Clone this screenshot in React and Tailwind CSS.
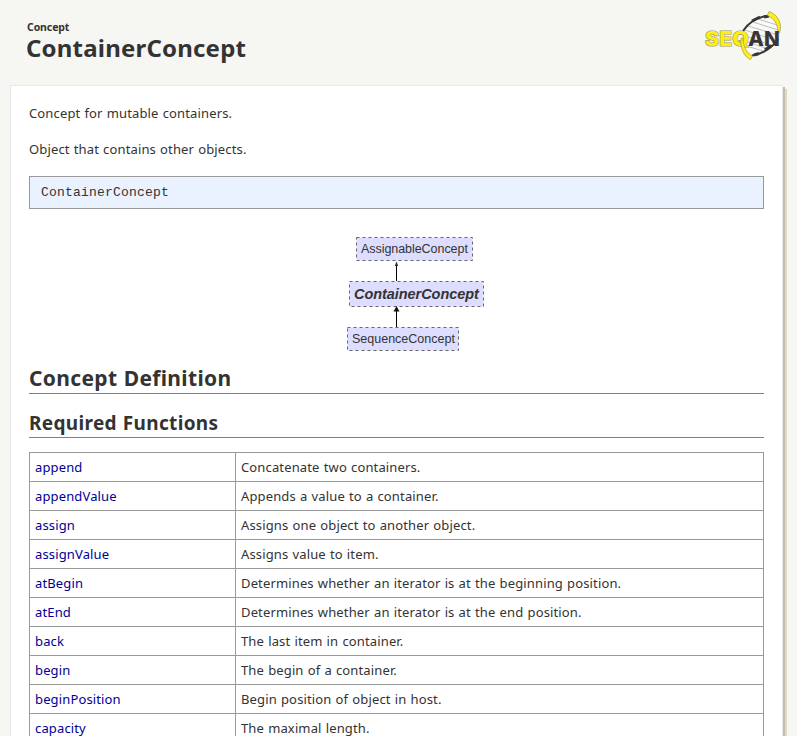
const functions = [
  ["append", "Concatenate two containers."],
  ["appendValue", "Appends a value to a container."],
  ["assign", "Assigns one object to another object."],
  ["assignValue", "Assigns value to item."],
  ["atBegin", "Determines whether an iterator is at the beginning position."],
  ["atEnd", "Determines whether an iterator is at the end position."],
  ["back", "The last item in container."],
  ["begin", "The begin of a container."],
  ["beginPosition", "Begin position of object in host."],
  ["capacity", "The maximal length."],
];

function Logo() {
  return (
    <svg className="mt-[5px] h-[60px] w-[85px]" viewBox="700 5 85 60">
      <path d="M743 31C748 23 757 17 768 16L777 24C781 39 766 52 752 55L744 50Z" fill="#fafaf8" />
      <path
        d="M758 19l19 6M753 22l25 8M748 26l30 9M745 30l32 11M743 35l30 11M742 40l26 9M743 45l20 6"
        stroke="#b4b4b4"
        strokeWidth=".9"
      />
      <path d="M743 31C749 22 758 16.500 768 16" fill="none" stroke="#3a3638" strokeWidth="2" />
      <path d="M752 21l8-4M764 17l5-1M754 55l5-1.500M765 50l6-4.500" fill="none" stroke="#3a3638" strokeWidth="3" />
      <path d="M752 55.500C763 54 773 47 778 39" fill="none" stroke="#3a3638" strokeWidth="2" />
      <path d="M769 11.500C777 14 783 23 779.500 33L778 32C778 25 774 18 767.500 15.500Z" fill="#ffee11" stroke="#9d985c" strokeWidth=".7" />
      <g fontFamily="Inter, sans-serif" fontSize="20.500" fontWeight="800">
        <text x="705" y="46" textLength="44" lengthAdjust="spacingAndGlyphs" fill="#ffee11" stroke="#9d985c" strokeWidth="1.2" paintOrder="stroke">SEQ</text>
        <text x="748" y="46" textLength="32" lengthAdjust="spacingAndGlyphs" fill="#3a3638">AN</text>
      </g>
      <path d="M741 38C740 48 744 57 750.500 59.500L752.500 56C747 53 743.500 48 743 38Z" fill="#ffee11" stroke="#9d985c" strokeWidth=".7" />
    </svg>
  );
}

function Hierarchy() {
  return (
    <svg className="mt-[27px] ml-[317px] h-[117px] w-[140px]" viewBox="346 236 140 117">
      <g fill="#ddddff" stroke="#666" strokeDasharray="3 3">
        <rect x="356.5" y="237.5" width="116" height="23" />
        <rect x="349.5" y="281.5" width="134" height="25" />
        <rect x="347.5" y="327.5" width="111" height="23" />
      </g>
      <path d="M396.5 264v17M396.5 309v18" stroke="#000" />
      <path d="M396.5 261.5l1.8 4.5h-3.6z" fill="#333" />
      <path d="M396.5 306l3 5.5h-6z" fill="#111" />
      <g fontFamily="Liberation Sans, Arial, sans-serif" fontSize="12.5" fill="#333">
        <text x="361" y="253" textLength="107">AssignableConcept</text>
        <text x="354" y="299" textLength="125" fontSize="14.5" fontWeight="700" fontStyle="italic">ContainerConcept</text>
        <text x="352" y="343" textLength="103">SequenceConcept</text>
      </g>
    </svg>
  );
}

export default function App() {
  return (
    <div className="h-[736px] overflow-hidden bg-[#f6f6f2] pl-[10px] font-['Noto_Sans',sans-serif] text-[13px] leading-[18px] tracking-[0.14px] text-[#333] [word-spacing:0.6px]">
      <header className="flex h-[85px] justify-between pr-[12px]">
        <div className="pt-[21px] pl-[16px] font-bold">
          <div className="pl-px text-[10.5px] leading-[13px] tracking-[-0.1px]">Concept</div>
          <h1 className="text-[24px] leading-[28px] tracking-[0.2px]">ContainerConcept</h1>
        </div>
        <Logo />
      </header>
      <main className="h-[700px] w-[773px] border border-[#e8e8e6] bg-white px-[18px] pt-[18px] shadow-[2px_2px_0_#c4bda9,4px_4px_0_#dfd8c9]">
        <p>Concept for mutable containers.</p>
        <p className="mt-[18px]">Object that contains other objects.</p>
        <pre className="mt-[18px] h-[33px] border border-[#999] bg-[#ebf2ff] px-[11px] pt-[7px] font-['Liberation_Mono',monospace] text-[13px] tracking-[0.2px]">ContainerConcept</pre>
        <Hierarchy />
        <h2 className="mt-[11px] h-[30px] border-b border-[#808080] text-[21px] leading-[29px] font-bold tracking-[0.33px]">Concept Definition</h2>
        <h3 className="mt-[15px] h-[29px] border-b border-[#808080] text-[19px] leading-[28px] font-bold tracking-[0.33px]">Required Functions</h3>
        <table className="mt-[14px] w-full table-fixed border-collapse">
          <tbody>
            {functions.map(([name, summary]) => (
              <tr key={name} className="h-[29px]">
                <td className="w-[206px] border border-[#999] px-[5px] text-[#000099]">{name}</td>
                <td className="border border-[#999] px-[5px]">{summary}</td>
              </tr>
            ))}
          </tbody>
        </table>
      </main>
    </div>
  );
}
